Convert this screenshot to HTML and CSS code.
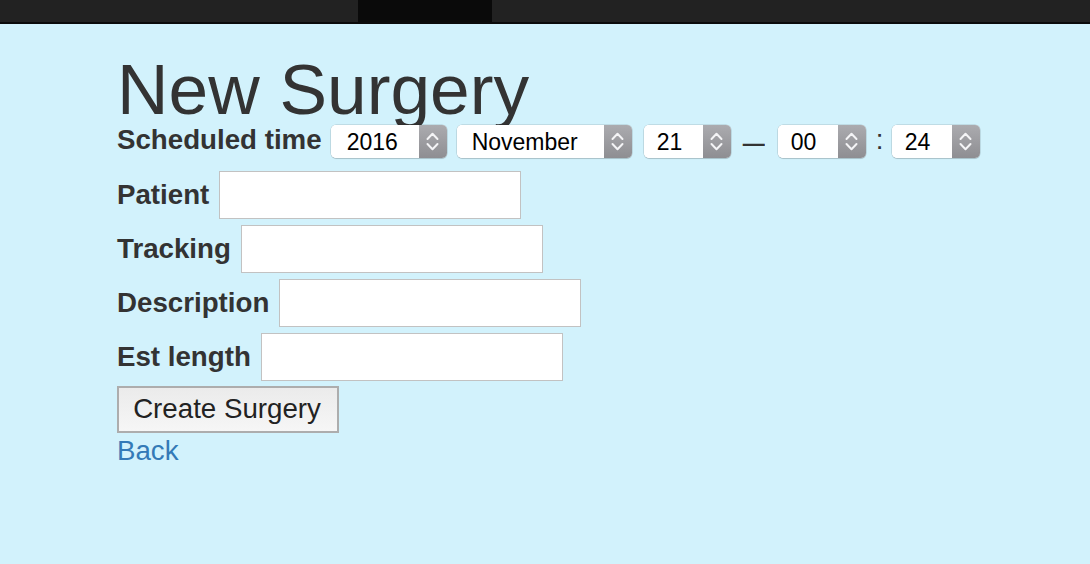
FILE: index.html
```html
<!DOCTYPE html>
<html>
<head>
<meta charset="utf-8">
<title>New Surgery</title>
<link rel="stylesheet" href="styles.css">
</head>
<body>
<div class="topbar">
  <div class="topbar-left"></div>
  <div class="topbar-tab"></div>
  <div class="topbar-right"></div>
</div>
<main class="page">
  <h1 class="title">New Surgery</h1>
  <form class="form">
    <div class="field field-time">
      <label class="label">Scheduled time</label>
      <div class="select select-year"><span class="select-value">2016</span><span class="select-arrows"><svg width="29" height="33" viewBox="0 0 29 33"><polyline points="8.5,14 13.5,8.8 18.5,14" /><polyline points="8.5,19 13.5,24.2 18.5,19" /></svg></span></div>
      <div class="select select-month"><span class="select-value">November</span><span class="select-arrows"><svg width="29" height="33" viewBox="0 0 29 33"><polyline points="8.5,14 13.5,8.8 18.5,14" /><polyline points="8.5,19 13.5,24.2 18.5,19" /></svg></span></div>
      <div class="select select-day"><span class="select-value">21</span><span class="select-arrows"><svg width="29" height="33" viewBox="0 0 29 33"><polyline points="8.5,14 13.5,8.8 18.5,14" /><polyline points="8.5,19 13.5,24.2 18.5,19" /></svg></span></div>
      <span class="sep-dash">—</span>
      <div class="select select-hour"><span class="select-value">00</span><span class="select-arrows"><svg width="29" height="33" viewBox="0 0 29 33"><polyline points="8.5,14 13.5,8.8 18.5,14" /><polyline points="8.5,19 13.5,24.2 18.5,19" /></svg></span></div>
      <span class="sep-colon">:</span>
      <div class="select select-minute"><span class="select-value">24</span><span class="select-arrows"><svg width="29" height="33" viewBox="0 0 29 33"><polyline points="8.5,14 13.5,8.8 18.5,14" /><polyline points="8.5,19 13.5,24.2 18.5,19" /></svg></span></div>
    </div>
    <div class="field">
      <label class="label">Patient</label>
      <input class="text-input" type="text">
    </div>
    <div class="field">
      <label class="label">Tracking</label>
      <input class="text-input" type="text">
    </div>
    <div class="field">
      <label class="label">Description</label>
      <input class="text-input" type="text">
    </div>
    <div class="field">
      <label class="label">Est length</label>
      <input class="text-input" type="text">
    </div>
    <button class="btn" type="button">Create Surgery</button>
  </form>
  <a class="back" href="#">Back</a>
</main>
</body>
</html>
```

FILE: styles.css
```css
html, body {
  margin: 0;
  padding: 0;
}

body {
  background: #d2f2fc;
  color: #333;
  font-family: "Liberation Sans", Arial, Helvetica, sans-serif;
  font-size: 27.7px;
  height: 564px;
  overflow: hidden;
}

.topbar {
  display: flex;
  height: 22px;
  border-bottom: 2px solid #0b0b0b;
  background: #222;
}

.topbar-left {
  width: 358px;
}

.topbar-tab {
  width: 134px;
  background: #0a0a0a;
}

.topbar-right {
  flex: 1;
}

.page {
  padding: 29.6px 0 0 117px;
}

.title {
  margin: 0;
  font-size: 71.3px;
  font-weight: normal;
  line-height: 71.3px;
  height: 71.3px;
  color: #333;
  position: relative;
  z-index: 0;
}

.form {
  margin: 0;
  position: relative;
  z-index: 1;
}

.field {
  display: flex;
  align-items: center;
  margin-top: 6px;
}

.field-time {
  margin-top: 0;
  height: 33px;
  margin-bottom: 13px;
}

.field-time + .field {
  margin-top: 0;
}

.label {
  font-weight: bold;
  margin-right: 10px;
  white-space: nowrap;
}

.field-time .label {
  margin-right: 9px;
  position: relative;
  top: -1px;
}

.text-input {
  box-sizing: border-box;
  width: 302px;
  height: 48px;
  margin: 0;
  padding: 0 6px;
  border: 1px solid #c2c2c2;
  background: #fff;
  font: inherit;
  outline: none;
}

.select {
  display: flex;
  box-sizing: border-box;
  height: 33px;
  border-radius: 5px;
  overflow: hidden;
  box-shadow: 0 0 0 0.5px rgba(0, 0, 0, 0.18), 0 1px 1px rgba(0, 0, 0, 0.12);
  background: #fff;
  color: #000;
  font-size: 23px;
}

.select-value {
  flex: 1;
  display: flex;
  align-items: center;
  padding-left: 16px;
  padding-top: 2px;
  background: #fff;
}

.select-arrows {
  width: 28px;
  height: 33px;
  background: linear-gradient(#ababaf, #8e8e92);
  display: block;
}

.select-arrows svg {
  display: block;
  fill: none;
  stroke: #f4f4f6;
  stroke-width: 2;
  stroke-linecap: round;
  stroke-linejoin: round;
}

.select-year {
  width: 116px;
}

.select-month {
  width: 175px;
  margin-left: 10px;
}

.select-month .select-value {
  padding-left: 15px;
}

.select-day {
  width: 87px;
  margin-left: 12px;
}

.select-day .select-value,
.select-hour .select-value,
.select-minute .select-value {
  padding-left: 13px;
}

.select-hour {
  width: 88px;
}

.select-minute {
  width: 88px;
}

.sep-dash {
  display: inline-block;
  font-size: 22px;
  width: 22px;
  margin-left: 12px;
  margin-right: 13px;
  color: #333;
  line-height: 1;
  transform: scaleY(1.5);
  position: relative;
  top: 1px;
}

.sep-colon {
  margin-left: 10px;
  margin-right: 8.3px;
  color: #333;
  position: relative;
  top: -1px;
}

.btn {
  display: block;
  box-sizing: border-box;
  margin: 5px 0 0 0;
  width: 222px;
  height: 47px;
  padding: 0 2px 0 0;
  border: 2px solid #adadad;
  border-radius: 0;
  background: linear-gradient(#ebebeb, #f6f6f6);
  color: #222;
  font: inherit;
  font-size: 27.7px;
  text-align: center;
}

.back {
  display: inline-block;
  margin-top: 2px;
  color: #337ab7;
  text-decoration: none;
}
```
